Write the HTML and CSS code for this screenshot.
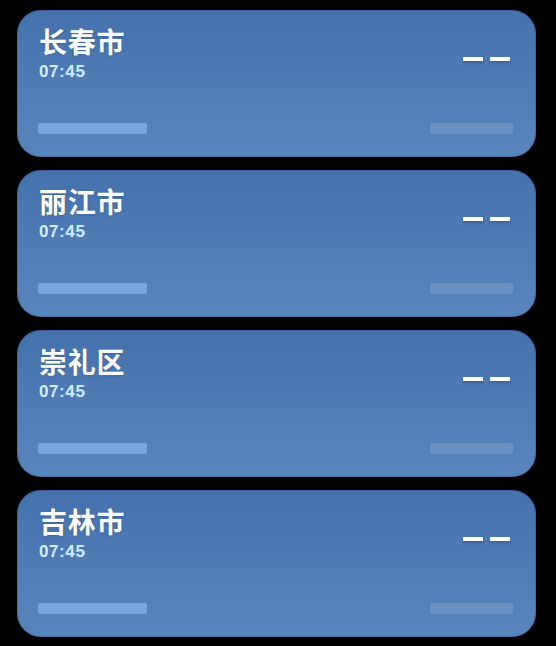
FILE: index.html
```html
<!DOCTYPE html>
<html lang="zh">
<head>
<meta charset="utf-8">
<link rel="stylesheet" href="styles.css">
</head>
<body>
<div class="list">
  <div class="card">
    <div class="top">
      <div class="info">
        <div class="city">长春市</div>
        <div class="time">07:45</div>
      </div>
      <div class="temp"><span class="dash"></span><span class="dash"></span></div>
    </div>
    <div class="bottom"><span class="bar bar-l"></span><span class="bar bar-r"></span></div>
  </div>
  <div class="card">
    <div class="top">
      <div class="info">
        <div class="city">丽江市</div>
        <div class="time">07:45</div>
      </div>
      <div class="temp"><span class="dash"></span><span class="dash"></span></div>
    </div>
    <div class="bottom"><span class="bar bar-l"></span><span class="bar bar-r"></span></div>
  </div>
  <div class="card">
    <div class="top">
      <div class="info">
        <div class="city">崇礼区</div>
        <div class="time">07:45</div>
      </div>
      <div class="temp"><span class="dash"></span><span class="dash"></span></div>
    </div>
    <div class="bottom"><span class="bar bar-l"></span><span class="bar bar-r"></span></div>
  </div>
  <div class="card">
    <div class="top">
      <div class="info">
        <div class="city">吉林市</div>
        <div class="time">07:45</div>
      </div>
      <div class="temp"><span class="dash"></span><span class="dash"></span></div>
    </div>
    <div class="bottom"><span class="bar bar-l"></span><span class="bar bar-r"></span></div>
  </div>
</div>
</body>
</html>
```
FILE: styles.css
```css
html, body {
  margin: 0;
  padding: 0;
  background: #000;
}
body {
  font-family: "Noto Sans CJK SC", "Noto Sans", sans-serif;
  width: 556px;
  height: 646px;
  overflow: hidden;
}
.list {
  display: flex;
  flex-direction: column;
  gap: 13px;
  padding: 10px 20px 0 17px;
}
.card {
  box-sizing: border-box;
  height: 147px;
  border-radius: 24px;
  background: linear-gradient(180deg, #4571ad 0%, #4f7cb5 50%, #5985bd 100%);
  box-shadow: inset 0 0 0 1px rgba(40, 70, 120, 0.35);
  display: flex;
  flex-direction: column;
  justify-content: space-between;
  padding: 14px 23px 23px 21px;
}
.top {
  display: flex;
  justify-content: space-between;
  align-items: flex-start;
}
.info {
  padding-left: 1px;
}
.city {
  color: #fff;
  font-size: 28px;
  font-weight: 700;
  line-height: 34px;
  letter-spacing: 0.8px;
  text-shadow: 0 1px 3px rgba(0, 0, 0, 0.15);
}
.time {
  font-family: "Liberation Sans", Arial, sans-serif;
  color: #cdeeff;
  font-size: 17px;
  font-weight: 700;
  line-height: 18px;
  letter-spacing: 0.6px;
  margin-top: 5px;
}
.temp {
  display: flex;
  gap: 7px;
  margin-top: 33px;
  margin-right: 3px;
}
.dash {
  display: block;
  width: 20px;
  height: 4px;
  background: #fff;
  box-shadow: 0 2px 3px rgba(20, 40, 80, 0.35);
}
.bottom {
  display: flex;
  justify-content: space-between;
  align-items: center;
}
.bar {
  display: block;
  height: 11px;
  border-radius: 2px;
}
.bar-l {
  width: 109px;
  background: #79a5df;
}
.bar-r {
  width: 83px;
  background: #6b92c4;
}
```
